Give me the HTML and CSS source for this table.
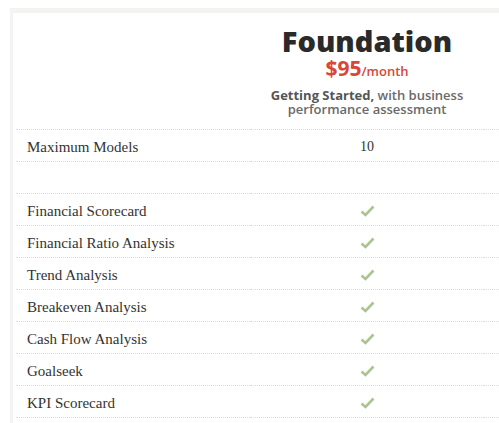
FILE: index.html
```html
<!DOCTYPE html>
<html>
<head>
<meta charset="utf-8">
<link rel="stylesheet" href="styles.css">
</head>
<body>
<div class="frame">
  <div class="table">
    <div class="row head">
      <div class="cell label"></div>
      <div class="cell plan">
        <div class="plan-name">Foundation</div>
        <div class="price"><span class="amount">$95</span><span class="per">/month</span></div>
        <div class="desc"><b>Getting Started,</b> with business performance assessment</div>
      </div>
      <div class="cell extra"></div>
    </div>
    <div class="row"><div class="cell label">Maximum Models</div><div class="cell val">10</div><div class="cell extra"></div></div>
    <div class="row"><div class="cell label"></div><div class="cell val"></div><div class="cell extra"></div></div>
    <div class="row"><div class="cell label">Financial Scorecard</div><div class="cell val"><svg class="check" viewBox="0 0 15 12"><path d="M1.5 6.5 L5.5 10 L13.5 1.5" /></svg></div><div class="cell extra"></div></div>
    <div class="row"><div class="cell label">Financial Ratio Analysis</div><div class="cell val"><svg class="check" viewBox="0 0 15 12"><path d="M1.5 6.5 L5.5 10 L13.5 1.5" /></svg></div><div class="cell extra"></div></div>
    <div class="row"><div class="cell label">Trend Analysis</div><div class="cell val"><svg class="check" viewBox="0 0 15 12"><path d="M1.5 6.5 L5.5 10 L13.5 1.5" /></svg></div><div class="cell extra"></div></div>
    <div class="row"><div class="cell label">Breakeven Analysis</div><div class="cell val"><svg class="check" viewBox="0 0 15 12"><path d="M1.5 6.5 L5.5 10 L13.5 1.5" /></svg></div><div class="cell extra"></div></div>
    <div class="row"><div class="cell label">Cash Flow Analysis</div><div class="cell val"><svg class="check" viewBox="0 0 15 12"><path d="M1.5 6.5 L5.5 10 L13.5 1.5" /></svg></div><div class="cell extra"></div></div>
    <div class="row"><div class="cell label">Goalseek</div><div class="cell val"><svg class="check" viewBox="0 0 15 12"><path d="M1.5 6.5 L5.5 10 L13.5 1.5" /></svg></div><div class="cell extra"></div></div>
    <div class="row"><div class="cell label">KPI Scorecard</div><div class="cell val"><svg class="check" viewBox="0 0 15 12"><path d="M1.5 6.5 L5.5 10 L13.5 1.5" /></svg></div><div class="cell extra"></div></div>
  </div>
</div>
</body>
</html>
```
FILE: styles.css
```css
html, body {
  margin: 0;
  padding: 0;
  background: #ffffff;
  overflow: hidden;
}
.frame {
  margin: 8px 0 0 10px;
  border-top: 5px solid #f3f3f1;
  border-left: 3px solid #f3f3f1;
  padding-left: 3px;
  height: 420px;
  overflow: hidden;
}
.table {
  display: flex;
  flex-direction: column;
}
.row {
  display: grid;
  grid-template-columns: 234px 234px 1fr;
  height: 32px;
}
.row.head {
  height: 117px;
}
.cell {
  border-bottom: 1px dotted #dcdcdc;
  display: flex;
  align-items: center;
  padding-top: 3px;
}
.head .cell {
  padding-top: 0;
}
.label {
  padding-left: 11px;
  font-family: "Liberation Serif", "Times New Roman", serif;
  font-size: 15px;
  color: #333;
}
.val {
  justify-content: center;
  font-family: "Liberation Serif", "Times New Roman", serif;
  font-size: 14px;
  color: #333;
}
.head .plan {
  flex-direction: column;
  justify-content: flex-start;
  padding-top: 13px;
  font-family: "Open Sans", sans-serif;
  text-align: center;
}
.plan-name {
  font-size: 29px;
  font-weight: 800;
  color: #2a2a2a;
  line-height: 30px;
}
.price {
  line-height: 24px;
  color: #d8473a;
  font-weight: 700;
}
.amount {
  font-size: 21px;
}
.per {
  font-size: 13px;
  font-weight: 600;
}
.desc {
  margin-top: 5px;
  width: 200px;
  font-size: 13px;
  line-height: 14px;
  font-weight: 600;
  color: #6a6a6a;
}
.desc b {
  font-weight: 700;
  color: #555;
}
.check {
  width: 15px;
  height: 12px;
  fill: none;
  stroke: #aec48e;
  stroke-width: 2.6;
}
```
